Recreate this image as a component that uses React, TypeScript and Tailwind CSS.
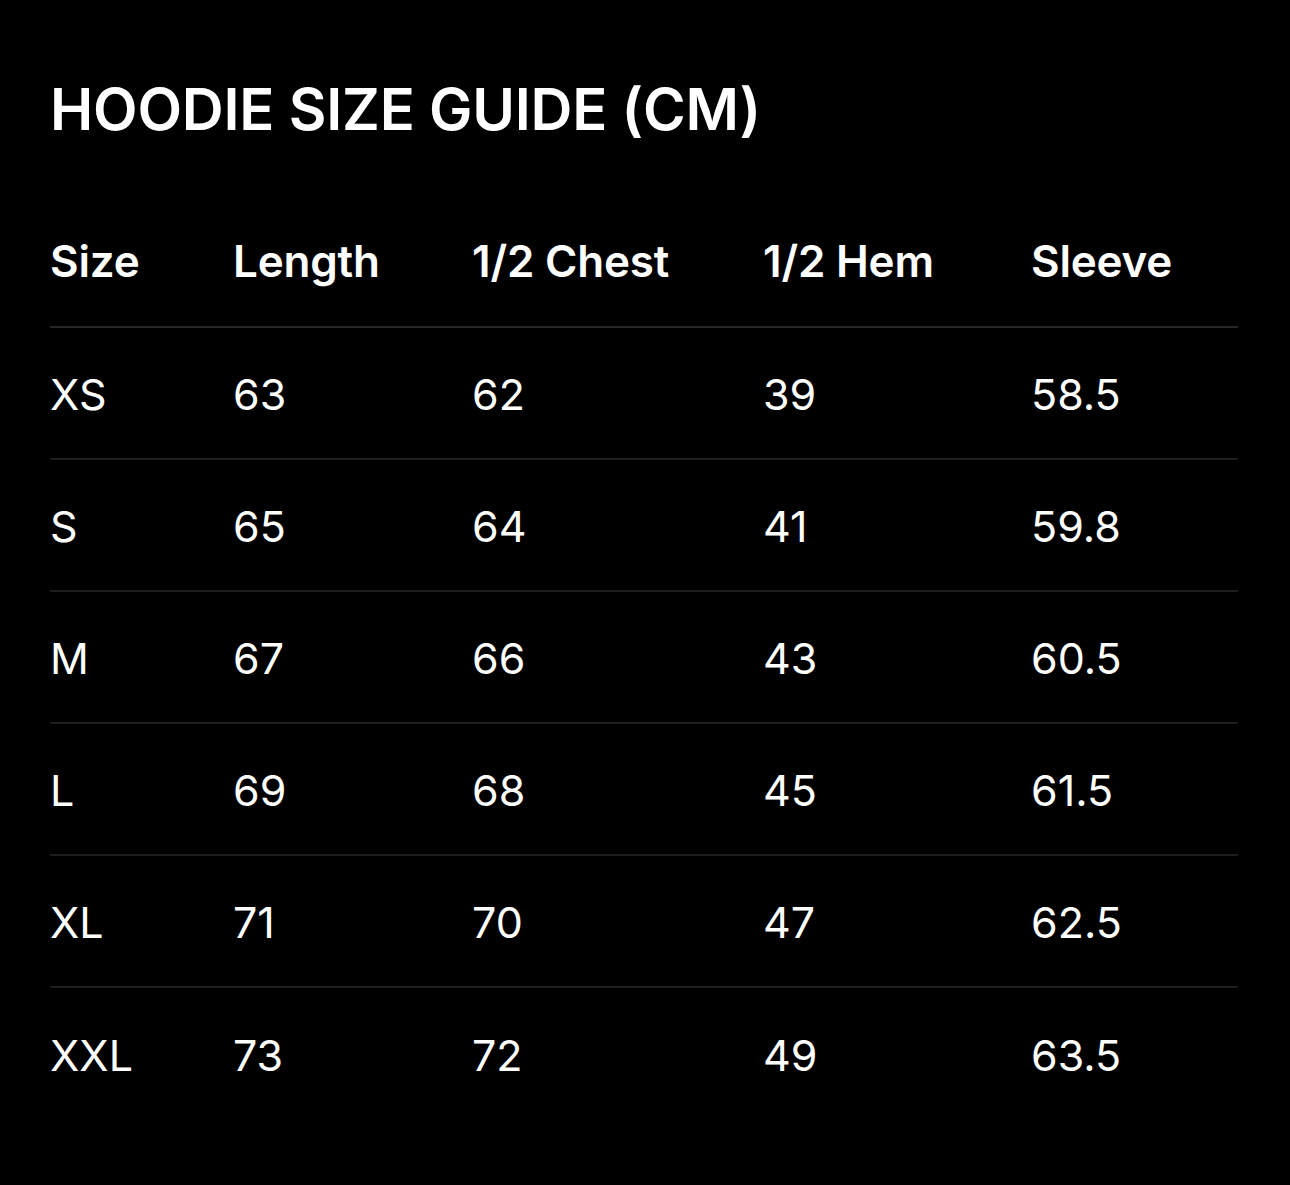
import React from "react";

const rows = [
  ["XS", "63", "62", "39", "58.5"],
  ["S", "65", "64", "41", "59.8"],
  ["M", "67", "66", "43", "60.5"],
  ["L", "69", "68", "45", "61.5"],
  ["XL", "71", "70", "47", "62.5"],
  ["XXL", "73", "72", "49", "63.5"],
];

const headers = ["Size", "Length", "1/2 Chest", "1/2 Hem", "Sleeve"];

const App = () => {
  return (
    <div
      className="min-h-[1185px] w-full bg-black text-white pl-[50px] pr-[52px] pt-[80px] pb-[65px]"
      style={{ fontFamily: 'Inter, "Noto Sans", sans-serif' }}
    >
      <h1 className="text-[58px] leading-[58px] font-semibold tracking-[-0.2px]">
        HOODIE SIZE GUIDE (CM)
      </h1>

      <div className="mt-[58px]">
        {/* header */}
        <div className="grid grid-cols-[183px_239px_291px_268px_1fr] h-[132px] items-center border-b-2 border-[#262626]">
          {headers.map((h) => (
            <div key={h} className="text-[44px] leading-none font-semibold tracking-[-0.2px]">
              {h}
            </div>
          ))}
        </div>

        {rows.map((r, i) => (
          <div
            key={r[0]}
            className={
              "grid grid-cols-[183px_239px_291px_268px_1fr] h-[132px] items-center pt-[2px] " +
              (i < rows.length - 1 ? "border-b-2 border-[#1c1c1c]" : "")
            }
          >
            {r.map((c, j) => (
              <div key={j} className="text-[43px] leading-none font-normal">
                {c}
              </div>
            ))}
          </div>
        ))}
      </div>
    </div>
  );
};

export default App;
